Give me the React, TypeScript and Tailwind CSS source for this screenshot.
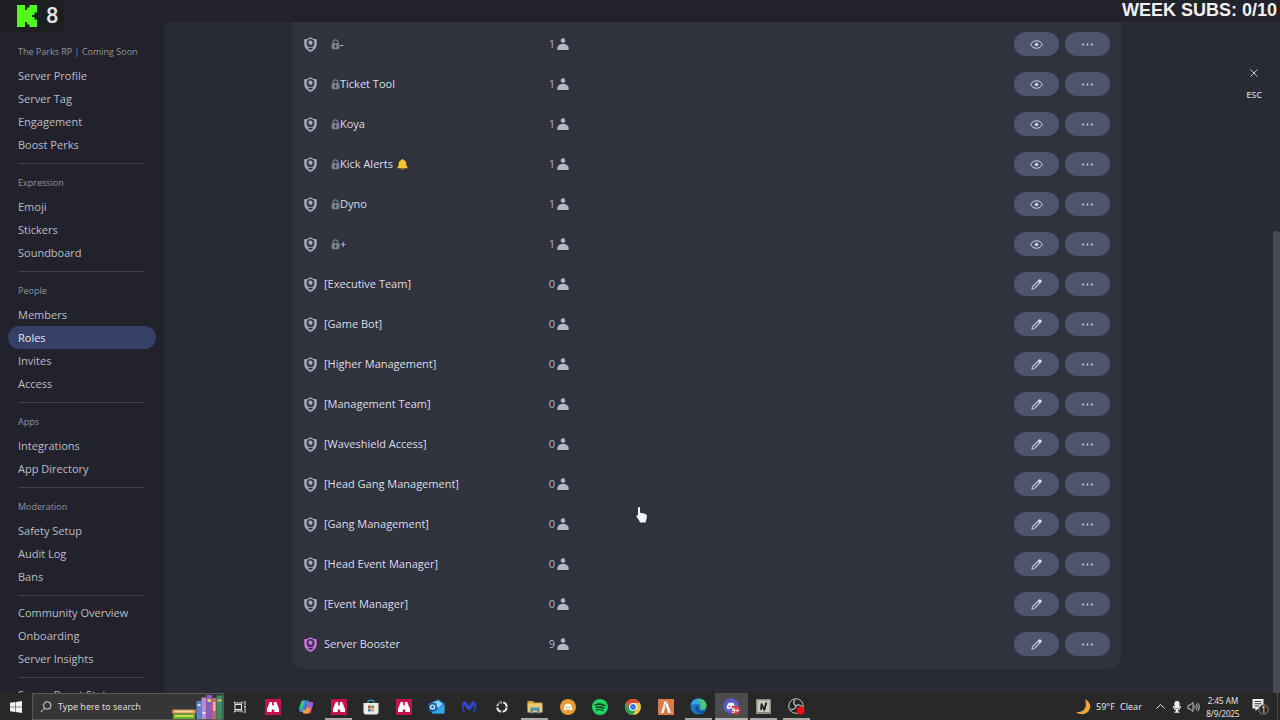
import type { ReactNode } from 'react'

interface NavGroup {
  title?: string
  items: string[]
}

interface Role {
  name: string
  members: number
  locked?: boolean
  bell?: boolean
  boost?: boolean
}

const NAV: NavGroup[] = [
  { title: 'The Parks RP | Coming Soon', items: ['Server Profile', 'Server Tag', 'Engagement', 'Boost Perks'] },
  { title: 'Expression', items: ['Emoji', 'Stickers', 'Soundboard'] },
  { title: 'People', items: ['Members', 'Roles', 'Invites', 'Access'] },
  { title: 'Apps', items: ['Integrations', 'App Directory'] },
  { title: 'Moderation', items: ['Safety Setup', 'Audit Log', 'Bans'] },
  { items: ['Community Overview', 'Onboarding', 'Server Insights'] },
  { items: ['Server Boost Status'] },
]

const ROLES: Role[] = [
  { name: '-', members: 1, locked: true },
  { name: 'Ticket Tool', members: 1, locked: true },
  { name: 'Koya', members: 1, locked: true },
  { name: 'Kick Alerts', members: 1, locked: true, bell: true },
  { name: 'Dyno', members: 1, locked: true },
  { name: '+', members: 1, locked: true },
  { name: '[Executive Team]', members: 0 },
  { name: '[Game Bot]', members: 0 },
  { name: '[Higher Management]', members: 0 },
  { name: '[Management Team]', members: 0 },
  { name: '[Waveshield Access]', members: 0 },
  { name: '[Head Gang Management]', members: 0 },
  { name: '[Gang Management]', members: 0 },
  { name: '[Head Event Manager]', members: 0 },
  { name: '[Event Manager]', members: 0 },
  { name: 'Server Booster', members: 9, boost: true },
]

function ShieldIcon({ boost }: { boost?: boolean }) {
  return (
    <svg className={boost ? 'w-[13px] h-[15px] shrink-0 text-[#d070e8]' : 'w-[13px] h-[15px] shrink-0 text-[#a3abb8]'} viewBox="0 0 26 30">
      <path
        fill="currentColor"
        d="M13 .5c1 0 1.800.4 2.500 1C17 3 19.500 4 23 4c1.400 0 2.500 1.100 2.500 2.500V14c0 7-4.500 12.500-11 15.300-1 .4-2 .4-3 0C5 26.500.5 21 .5 14V6.500C.5 5.100 1.600 4 3 4c3.500 0 6-1 7.500-2.500.7-.6 1.500-1 2.500-1z"
      />
      <circle cx="13" cy="12" r="7.800" fill="#30323e" />
      <circle cx="13" cy="11.500" r="4.300" fill="currentColor" />
      <path fill="#30323e" d="M6.500 19.500h13c-.8 3-3.500 5.500-6.500 6.500-3-1-5.700-3.500-6.500-6.500z" />
      <path fill="currentColor" d="M5 18.500c2.500 2.500 13.500 2.500 16 0v2c-2.500 2.200-13.500 2.200-16 0z" />
    </svg>
  )
}

function LockIcon() {
  return (
    <svg className="w-[9px] h-[11px] shrink-0 text-[#7b7e8c]" viewBox="0 0 18 22">
      <path d="M4.500 9V6a4.500 4.500 0 0 1 9 0v3" fill="none" stroke="currentColor" strokeWidth="2.500" />
      <rect x="1" y="8" width="16" height="12.500" rx="3" fill="currentColor" />
      <path d="M9 11.500v5" stroke="#30323e" strokeWidth="2.500" strokeLinecap="round" />
    </svg>
  )
}

function BellIcon() {
  return (
    <svg className="ml-1 w-[11px] h-[11px] shrink-0" viewBox="0 0 22 22">
      <path d="M11 0c1.300 0 2 .8 2 2 3.500 1 5.500 3.500 5.500 7 0 3.500.5 5 2.500 7v2.500H1V16c2-2 2.500-3.500 2.500-7C3.500 5.500 5.500 3 9 2c0-1.200.7-2 2-2z" fill="#f2c230" />
      <path d="M8 19h6c-.3 1.500-1.500 2.300-3 2.300S8.300 20.500 8 19z" fill="#c9922a" />
    </svg>
  )
}

function PersonIcon() {
  return (
    <svg className="w-3 h-3 shrink-0 text-[#b3b6c6]" viewBox="0 0 24 24" fill="currentColor">
      <circle cx="12" cy="5" r="4.600" />
      <path d="M.5 21.500C.5 16 5 11.500 12 11.500s11.500 4.500 11.500 10c0 1.700-.8 2.500-2.500 2.500H3c-1.700 0-2.500-.8-2.500-2.500z" />
    </svg>
  )
}

function EyeIcon() {
  return (
    <svg className="w-[13px] h-[13px]" viewBox="0 0 26 26" fill="none" stroke="currentColor" strokeWidth="2">
      <path d="M1.500 13C3.500 8.800 7.500 5.500 13 5.500s9.500 3.300 11.500 7.500c-2 4.200-6 7.500-11.500 7.500S3.500 17.200 1.500 13z" />
      <circle cx="13" cy="13" r="2.600" fill="currentColor" />
    </svg>
  )
}

function PencilIcon() {
  return (
    <svg className="w-[11px] h-[11px]" viewBox="0 0 24 24" fill="none" stroke="currentColor" strokeWidth="2.200" strokeLinejoin="round">
      <path d="M2 22l1-5L15.500 4.500l4 4L7 21z" />
      <path d="M16 4l1.700-1.700c1-1 2.200-.8 3 0l1 1c.8.8 1 2 0 3L20 8z" fill="currentColor" />
    </svg>
  )
}

function DotsIcon() {
  return (
    <svg className="w-[11px] h-[11px]" viewBox="0 0 22 22" fill="currentColor">
      <circle cx="2.200" cy="11" r="2" />
      <circle cx="11" cy="11" r="2" />
      <circle cx="19.800" cy="11" r="2" />
    </svg>
  )
}

function PillButton({ label, children }: { label: string; children: ReactNode }) {
  return (
    <button aria-label={label} className="flex h-6 w-[45px] items-center justify-center rounded-xl bg-[#4e536e] text-[#d5d8ea]">
      {children}
    </button>
  )
}

function Sidebar() {
  return (
    <nav className="w-[164px] shrink-0 overflow-hidden pt-[33px] pl-2 pr-2">
      {NAV.map((group, i) => (
        <section key={i}>
          {i > 0 && <hr className="mx-[11px] h-px border-0 bg-[#41414c]" />}
          {group.title ? (
            <h2 className="pt-[11px] pb-1 pl-[10px] text-[9px] leading-4 whitespace-nowrap text-[#9293a0]">{group.title}</h2>
          ) : (
            <div className="h-[5px]" />
          )}
          <ul className="pb-[7px]">
            {group.items.map((item) => (
              <li key={item}>
                <a
                  href="#"
                  className={
                    item === 'Roles'
                      ? 'block rounded-full bg-[#364066] pl-[10px] text-[11px] leading-[23px] font-medium text-[#e6e7f2]'
                      : 'block rounded-full pl-[10px] text-[11px] leading-[23px] font-medium whitespace-nowrap text-[#bcbdc9]'
                  }
                >
                  {item}
                </a>
              </li>
            ))}
          </ul>
        </section>
      ))}
    </nav>
  )
}

function RoleRow({ role }: { role: Role }) {
  return (
    <tr className="h-10">
      <td className="w-[236px] p-0 pl-3">
        <div className="flex items-center">
          <ShieldIcon boost={role.boost} />
          <span className={role.locked ? 'ml-3.5 flex items-center' : 'ml-[7px] flex items-center'}>
            {role.locked && <LockIcon />}
            <span className="text-[11px] leading-4 font-medium whitespace-nowrap text-[#dcdde8]">{role.name}</span>
            {role.bell && <BellIcon />}
          </span>
        </div>
      </td>
      <td className="w-[41px] p-0">
        <div className="flex items-center justify-end gap-0.5 text-[11px] leading-4 text-[#b3b6c6]">
          {role.members}
          <PersonIcon />
        </div>
      </td>
      <td className="p-0 pr-[11px]">
        <div className="flex justify-end gap-1.5">
          <PillButton label={role.locked ? 'View role' : 'Edit role'}>{role.locked ? <EyeIcon /> : <PencilIcon />}</PillButton>
          <PillButton label="More">
            <DotsIcon />
          </PillButton>
        </div>
      </td>
    </tr>
  )
}

/* ---------- taskbar icons ---------- */

function BinocularsIcon() {
  return (
    <svg className="size-4" viewBox="0 0 32 32">
      <rect width="32" height="32" fill="#c4124e" />
      <path fill="#fff" d="M9.500 6h5v6h3V6h5L28 20v6h-9.500v-5h-5v5H4v-6z" />
      <path stroke="#c4124e" strokeWidth="1.500" d="M16 6v8" />
    </svg>
  )
}

function CopilotIcon() {
  return (
    <svg className="size-4" viewBox="0 0 32 32">
      <path fill="#2b8fe0" d="M10 3h9c2 0 3 1 3.500 3l1 4h-6l-4 13c-.6 2-1.500 3-3.500 3H6c-3 0-4.500-2-3.700-5L6 7c.8-2.500 2-4 4-4z" />
      <path fill="#3fc07a" d="M3 15l3-8c.8-2.500 2-4 4-4h4L9 20H3z" />
      <path fill="#e8638c" d="M22 29h-9c-2 0-3-1-3.500-3l-1-4h6l4-13c.6-2 1.500-3 3.500-3h4c3 0 4.500 2 3.700 5L26 25c-.8 2.500-2 4-4 4z" />
      <path fill="#9b5ce0" d="M18 10c.6-2.500 1.500-4 4-4h4c3 0 4.500 2 3.700 5L28 17H16z" />
      <path fill="#f0a03c" d="M9 22h6l3-5h6l-2 8c-.8 2.500-2 4-4 4h-5c-2 0-3.500-2-4-7z" />
    </svg>
  )
}

function StoreIcon() {
  return (
    <svg className="size-4" viewBox="0 0 32 32">
      <path d="M10 9V5c0-1.500 1-2.500 2.500-2.500h7C21 2.500 22 3.500 22 5v4" fill="none" stroke="#3fa3b8" strokeWidth="2.500" />
      <path fill="#ecece6" d="M1 8h30v18c0 3-1.500 5-5 5H6c-3.500 0-5-2-5-5z" />
      <path fill="#c9503a" d="M10 13h5.500v5.500H10z" />
      <path fill="#6a9b4a" d="M16.500 13H22v5.500h-5.500z" />
      <path fill="#3f83b8" d="M10 19.500h5.500V25H10z" />
      <path fill="#d8a83a" d="M16.500 19.500H22V25h-5.500z" />
    </svg>
  )
}

function OutlookIcon() {
  return (
    <svg className="size-[17px]" viewBox="0 0 34 34">
      <path fill="#1b6fc0" d="M7 9L20 2l13 9v17c0 2-1 3-3 3H10c-2 0-3-1-3-3z" />
      <path fill="#8fd0f5" d="M9 9l12-4 9 7-9 8z" />
      <path fill="#35a9e8" d="M7 31l26-18v15c0 2-1 3-3 3z" />
      <rect x="1" y="10" width="16" height="16" rx="2" fill="#1562b5" />
      <circle cx="9" cy="18" r="4" fill="none" stroke="#fff" strokeWidth="2.400" />
    </svg>
  )
}

function MalwareIcon() {
  return (
    <svg className="size-4" viewBox="0 0 32 32">
      <path
        fill="#2f45c8"
        d="M7 27C1 23-.5 13 4 6c1.500-2 4-2.500 6-.5l6 8 6-8c2-2 4.500-1.500 6 .5 4.500 7 3 17-3 21l-1-2c3-3.500 3.500-8 2-13l-7 9c-1.500 2-4.500 2-6 0l-7-9c-1.500 5-1 9.500 2 13z"
      />
    </svg>
  )
}

function CrosshairIcon() {
  return (
    <svg className="size-3.5" viewBox="0 0 28 28">
      <circle cx="14" cy="14" r="9.500" fill="none" stroke="#e8e8e8" strokeWidth="4" strokeDasharray="11.900 3" strokeDashoffset="-1.500" />
      <path d="M5 9a10 10 0 0 1 7-5" stroke="#50656f" strokeWidth="4" fill="none" />
    </svg>
  )
}

function FolderIcon() {
  return (
    <svg className="size-4" viewBox="0 0 32 32">
      <path fill="#d99f3a" d="M1 4h11l3 3h15v8H1z" />
      <path fill="#ecc878" d="M1 9h30v18H1z" />
      <path fill="#4b94b8" d="M7 17h18v12h-5v-6h-8v6H7z" />
    </svg>
  )
}

function DiscordFace({ color }: { color: string }) {
  return (
    <>
      <path fill="#fff" d="M11 10.500c3-1.300 7-1.300 10 0 2.500 3 3.800 6.500 3.500 10.500-1.500 1.200-3 1.800-4.500 2l-1.200-2h-5.600L12 23c-1.500-.2-3-.8-4.500-2-.3-4 1-7.500 3.500-10.500z" />
      <circle cx="12.800" cy="17" r="1.900" fill={color} />
      <circle cx="19.200" cy="17" r="1.900" fill={color} />
    </>
  )
}

function DiscordOrangeIcon() {
  return (
    <svg className="size-4" viewBox="0 0 32 32">
      <circle cx="16" cy="16" r="16" fill="#e79b36" />
      <DiscordFace color="#e79b36" />
    </svg>
  )
}

function DiscordBadgeIcon() {
  return (
    <svg className="size-[17px]" viewBox="0 0 34 34">
      <circle cx="16" cy="16" r="15.500" fill="#5a5ad0" />
      <DiscordFace color="#5a5ad0" />
      <circle cx="25" cy="24" r="9" fill="#dc3a48" />
      <text x="25" y="29" textAnchor="middle" fontSize="13" fontWeight="700" fill="#fff">
        9+
      </text>
    </svg>
  )
}

function SpotifyIcon() {
  return (
    <svg className="size-4" viewBox="0 0 32 32" fill="none" stroke="#16351f" strokeLinecap="round">
      <circle cx="16" cy="16" r="16" fill="#1ed760" stroke="none" />
      <path strokeWidth="3.200" d="M7 11.500c6-1.800 13-1.300 18.500 1.700" />
      <path strokeWidth="2.700" d="M8 16.800c5.500-1.500 11-1 15.500 1.600" />
      <path strokeWidth="2.200" d="M9 21.700c4.500-1.200 9-.8 12.800 1.400" />
    </svg>
  )
}

function ChromeIcon() {
  return (
    <svg className="size-4" viewBox="0 0 32 32">
      <circle cx="16" cy="16" r="16" fill="#f6c63a" />
      <path fill="#dd4636" d="M2.100 8A16 16 0 0 1 29.900 8H16l-7 12z" />
      <path fill="#2c9e55" d="M2.100 8A16 16 0 0 0 16 32l7-12H9z" />
      <circle cx="16" cy="16" r="8" fill="#fff" />
      <circle cx="16" cy="16" r="6" fill="#3d7ee8" />
    </svg>
  )
}

function LambdaIcon() {
  return (
    <svg className="size-4" viewBox="0 0 32 32">
      <rect width="32" height="32" fill="#dd7a45" />
      <path fill="#fff" d="M13 5h5l8 23h-5.500L15.500 13 11 28H6z" />
      <path stroke="#dd7a45" strokeWidth="1.500" d="M19 5l-8 12" />
    </svg>
  )
}

function EdgeIcon() {
  return (
    <svg className="size-[17px]" viewBox="0 0 34 34">
      <circle cx="17" cy="17" r="16" fill="#1c74c4" />
      <path fill="#2fa9dc" d="M1.500 14C3 6 9.500 1 17 1c9 0 16 6.500 16 14 0 5-4 8-8.500 8-3 0-4.500-1-3.500-3 1-2.500-.5-8-8-8-5 0-9 2-11.500 2z" />
      <path fill="#52c46a" d="M22 2c7 2 11 7.500 11 13 0 5-4 8-8.500 8-3 0-4.500-1-3.500-3 2-5 2-12-6-15z" />
      <path fill="#124f96" d="M11 18c-1 6 4 12 11 13 3 0 7-2.500 9-6-7 3-15 1-15-6 0-1 .3-2 1-3-3-1-5.500-.5-6 2z" />
    </svg>
  )
}

function NoteIcon() {
  return (
    <svg className="size-[15px]" viewBox="0 0 30 30">
      <rect width="30" height="30" fill="#8b8d80" />
      <rect x="3" y="3" width="24" height="23" fill="#c9cbc0" />
      <path fill="none" stroke="#22231f" strokeWidth="3.500" d="M10 22l1-13 5 12 5-14" />
      <path stroke="#22231f" strokeWidth="2.500" d="M20 8l-2 13" />
    </svg>
  )
}

function ObsIcon() {
  return (
    <svg className="size-[17px]" viewBox="0 0 34 34">
      <circle cx="16" cy="16" r="14.500" fill="#222" stroke="#c9c9c9" strokeWidth="2" />
      <path fill="none" stroke="#c9c9c9" strokeWidth="2.500" d="M14 4c-4 4-3 9 2 12M16 16c5-4 10-2 12 2M16 16c-1 6-6 8-11 6" />
      <circle cx="25" cy="25" r="8" fill="#f00d18" />
    </svg>
  )
}

function TaskViewIcon() {
  return (
    <svg className="size-3.5" viewBox="0 0 28 28" fill="none" stroke="#e4e4e4" strokeWidth="2.200">
      <rect x="4" y="9" width="13" height="10" />
      <path d="M3 3v3h15V3M3 25v-3h15v3M24 2v9M24 17v9" />
      <rect x="22.500" y="12" width="3" height="4" fill="#e4e4e4" stroke="none" />
    </svg>
  )
}

function BooksIcon() {
  return (
    <svg className="h-6 w-[51px] shrink-0" viewBox="0 0 102 48">
      <rect x="0" y="29" width="48" height="8" rx="2" fill="#d98a5a" />
      <rect x="5" y="31" width="38" height="4" fill="#f2d59a" />
      <rect x="2" y="37" width="44" height="11" rx="2" fill="#6fae2c" />
      <rect x="6" y="40" width="36" height="4" fill="#c2e05a" />
      <rect x="49" y="12" width="10" height="36" fill="#5c86c8" />
      <rect x="59" y="5" width="10" height="43" fill="#b98ad8" />
      <rect x="69" y="0" width="11" height="48" fill="#8b5cc0" />
      <rect x="71" y="8" width="7" height="6" fill="#e8c878" />
      <rect x="80" y="6" width="9" height="42" fill="#c0607a" />
      <rect x="82" y="14" width="5" height="18" fill="#e8b0a0" />
      <rect x="89" y="1" width="12" height="47" fill="#3e8a62" />
      <rect x="91" y="9" width="8" height="4" fill="#e0c070" />
      <rect x="51" y="18" width="6" height="4" fill="#c8dcf4" />
      <rect x="61" y="34" width="6" height="4" fill="#f0d8f4" />
    </svg>
  )
}

interface TaskApp {
  name: string
  icon: ReactNode
  open?: boolean
  active?: boolean
}

const APPS: TaskApp[] = [
  { name: 'Task View', icon: <TaskViewIcon /> },
  { name: 'Binoculars', icon: <BinocularsIcon /> },
  { name: 'Copilot', icon: <CopilotIcon /> },
  { name: 'Binoculars 2', icon: <BinocularsIcon />, open: true },
  { name: 'Store', icon: <StoreIcon /> },
  { name: 'Binoculars 3', icon: <BinocularsIcon /> },
  { name: 'Outlook', icon: <OutlookIcon /> },
  { name: 'Malwarebytes', icon: <MalwareIcon /> },
  { name: 'Crosshair', icon: <CrosshairIcon /> },
  { name: 'File Explorer', icon: <FolderIcon />, open: true },
  { name: 'Discord Canary', icon: <DiscordOrangeIcon /> },
  { name: 'Spotify', icon: <SpotifyIcon /> },
  { name: 'Chrome', icon: <ChromeIcon /> },
  { name: 'FiveM', icon: <LambdaIcon /> },
  { name: 'Edge', icon: <EdgeIcon />, open: true },
  { name: 'Discord', icon: <DiscordBadgeIcon />, open: true, active: true },
  { name: 'Notes', icon: <NoteIcon />, open: true },
  { name: 'OBS', icon: <ObsIcon />, open: true },
]

function Taskbar() {
  return (
    <footer className="flex h-[27px] shrink-0 items-stretch bg-[#282828] font-['Noto_Sans','Open_Sans',sans-serif] text-[#e6e6e6]">
      <button aria-label="Start" className="flex w-8 items-center justify-center">
        <svg className="size-3" viewBox="0 0 24 24" fill="#f2f2f2">
          <path d="M0 3.500l10.500-1.500v9.500H0zM11.500 1.800L24 0v11.500H11.500zM0 12.500h10.500V22L0 20.500zM11.500 12.500H24V24l-12.500-1.800z" />
        </svg>
      </button>
      <label className="flex w-48 items-center border border-[#5a5a5a] bg-[#363636] pl-[7px]">
        <svg className="size-3 shrink-0" viewBox="0 0 24 24" fill="none" stroke="#e4e4e4" strokeWidth="2">
          <circle cx="14.500" cy="9" r="7.500" />
          <path d="M9 14.500L1 22.500" />
        </svg>
        <input
          aria-label="Type here to search"
          placeholder="Type here to search"
          className="ml-[6px] w-0 min-w-0 flex-1 bg-transparent text-[9px] leading-4 outline-none placeholder:text-[#dcdcdc]"
        />
        <BooksIcon />
      </label>
      <div className="grid w-[589px] grid-cols-18">
        {APPS.map((app) => (
          <button
            key={app.name}
            aria-label={app.name}
            className={app.active ? 'flex flex-col items-center bg-[#4c4c4c]' : 'flex flex-col items-center'}
          >
            <span className="flex flex-1 items-center pt-0.5">{app.icon}</span>
            <span
              className={
                app.active ? 'h-0.5 w-full bg-[#b4b4b4]' : app.open ? 'h-0.5 w-[27px] bg-[#a8a8a8]' : 'h-0.5 w-[27px]'
              }
            />
          </button>
        ))}
      </div>
      <div className="ml-auto flex items-center text-[9px] leading-[13px] whitespace-nowrap">
        <svg className="size-4" viewBox="0 0 32 32">
          <path fill="#f0a73a" d="M20 1c9 3 13 12 9 20-4 9-16 13-27 5 10 1 17-3 19-10 1.500-5 1-10-1-15z" />
        </svg>
        <span className="ml-[5px] w-6">59°F</span>
        <span className="w-9">Clear</span>
        <svg className="size-[9px]" viewBox="0 0 18 18" fill="none" stroke="#e4e4e4" strokeWidth="2">
          <path d="M1 13l8-8 8 8" />
        </svg>
        <svg className="ml-1.5 size-3" viewBox="0 0 24 24" fill="#f0f0f0">
          <rect x="7" y="0" width="10" height="15" rx="4.500" />
          <path d="M4 10h2.500c0 4 2 6 5.500 6s5.500-2 5.500-6H20c0 5-2.500 7.500-6 8.300V21h3v2.500H7V21h3v-2.700C6.500 17.500 4 15 4 10z" />
        </svg>
        <svg className="ml-1 h-3 w-[13px]" viewBox="0 0 26 24" fill="none" stroke="#d8d8d8" strokeWidth="1.800">
          <path d="M2 8.500h4L12 3v18l-6-5.500H2z" />
          <path d="M15 9c1.300 2 1.300 4 0 6M18 6c3 4 3 8 0 12M21.500 3.500c4 5.500 4 11.500 0 17" />
        </svg>
        <span className="ml-[6px] w-[34px] text-center text-[8px]">
          2:45 AM
          <br />
          8/9/2025
        </span>
        <svg className="ml-3 size-[17px]" viewBox="0 0 34 34">
          <path fill="#f0f0f0" d="M1 2h22v19H12l-5 5v-5H1z" />
          <path stroke="#282828" strokeWidth="1.800" d="M5 7h14M5 11.500h14M5 16h9" />
          <circle cx="23" cy="23" r="9.500" fill="#282828" stroke="#a8a8a8" strokeWidth="1.500" />
          <text x="23" y="29" textAnchor="middle" fontSize="16" fill="#f0f0f0">
            1
          </text>
        </svg>
        <span className="ml-2 mr-0.5 h-[27px] w-px bg-[#4a4a4a]" />
      </div>
    </footer>
  )
}

export default function App() {
  return (
    <div className="relative flex h-screen flex-col overflow-hidden bg-[#22222c] font-['Open_Sans','Inter',sans-serif]">
      <div className="flex min-h-0 flex-1">
        <Sidebar />
        <main className="mt-[22px] flex min-w-0 flex-1 items-start rounded-tl-lg bg-[#292b34]">
          <div className="ml-32 min-w-0 flex-1 rounded-b-xl bg-[#30323e] pt-0.5 pb-[5px]">
            <table className="w-full table-fixed border-collapse">
              <tbody>
                {ROLES.map((role) => (
                  <RoleRow key={role.name} role={role} />
                ))}
              </tbody>
            </table>
          </div>
          <div className="flex w-[159px] shrink-0 items-start justify-end self-stretch">
            <button className="mt-[46px] mr-2.5 flex w-[18px] flex-col items-center text-[9px] leading-[13px] font-semibold text-[#c8c9d4]">
              <svg className="mb-[10px] size-2.5" viewBox="0 0 20 20" fill="none" stroke="currentColor" strokeWidth="2">
                <path d="M3 3l14 14M17 3L3 17" />
              </svg>
              ESC
            </button>
            <div className="mt-[209px] w-[7px] self-stretch rounded-t-full bg-[#4a4a57]" />
          </div>
        </main>
      </div>
      <Taskbar />

      {/* Stream overlays */}
      <div className="absolute top-0 left-0 flex h-8 w-16 items-center rounded-br-lg bg-[#1d1e22] pl-[17px]">
        <svg className="h-[22px] w-5" viewBox="0 0 20 22" fill="#53fc18">
          <path d="M0 0h8v5h2V2.500h2.500V0H20v7.500h-2.500V10H15v2h2.500v2.500H20V22h-7.500v-2.500H10V17H8v5H0z" />
        </svg>
        <span className="ml-[9px] font-['Roboto',sans-serif] text-[22px] leading-8 font-medium text-[#e4e4e4]">8</span>
      </div>
      <div className="absolute top-0 right-[3px] font-['Liberation_Sans',sans-serif] text-[18px] leading-5 font-bold text-[#f0f0f0]">
        WEEK SUBS: 0/10
      </div>
      <svg className="absolute top-[507px] left-[636px] h-4 w-[11px]" viewBox="0 0 22 32">
        <path
          fill="#f4f4fa"
          d="M4 2c0-2.500 4-2.500 4 0v10c1-1 3-.8 3.500.7 1.200-1 3-.6 3.500.9 1.200-.8 3-.2 3.300 1.300 1.500-.6 3.200.2 3.200 2V22c0 3-2 5-2.500 9H8c-1-4-4-7-7-12-1-2 1-3.500 3-1.500z"
        />
      </svg>
    </div>
  )
}
